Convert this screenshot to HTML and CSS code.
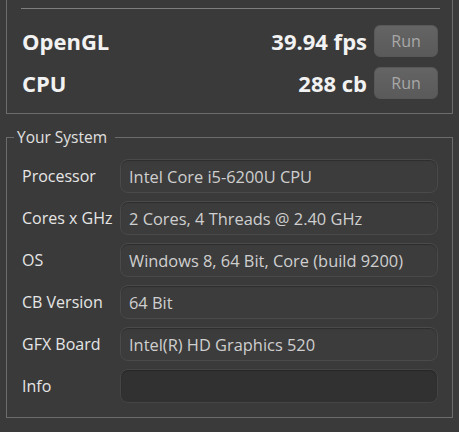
FILE: index.html
```html
<!DOCTYPE html>
<html>
<head>
<meta charset="utf-8">
<link rel="stylesheet" href="styles.css">
</head>
<body>
<div class="results">
  <div class="sep"></div>
  <div class="bench">
    <div class="bench-row">
      <span class="bench-name">OpenGL</span>
      <span class="bench-score">39.94 fps</span>
      <button class="run">Run</button>
    </div>
    <div class="bench-row">
      <span class="bench-name">CPU</span>
      <span class="bench-score">288 cb</span>
      <button class="run">Run</button>
    </div>
  </div>
</div>
<fieldset class="system">
  <legend class="system-title">Your System</legend>
  <div class="sys-grid">
    <div class="label">Processor</div><div class="field">Intel Core i5-6200U CPU</div>
    <div class="label">Cores x GHz</div><div class="field">2 Cores, 4 Threads @ 2.40 GHz</div>
    <div class="label">OS</div><div class="field">Windows 8, 64 Bit, Core (build 9200)</div>
    <div class="label">CB Version</div><div class="field">64 Bit</div>
    <div class="label">GFX Board</div><div class="field">Intel(R) HD Graphics 520</div>
    <div class="label">Info</div><div class="field field-empty"></div>
  </div>
</fieldset>
</body>
</html>
```
FILE: styles.css
```css
html, body {
  margin: 0;
  padding: 0;
  background: #3a3a3a;
  font-family: "Open Sans", "Noto Sans", sans-serif;
  color: #e4e4e4;
  width: 459px;
  height: 432px;
  overflow: hidden;
}

.results {
  margin-left: 6px;
  width: 445px;
  border: 1px solid #6c6c6c;
  border-top: none;
  padding-top: 8px;
  padding-bottom: 14px;
}

.sep {
  height: 1px;
  background: #7e7e7e;
  margin: 0 12px 0 14px;
}

.bench {
  display: flex;
  flex-direction: column;
  gap: 10px;
  padding: 16px 14px 0 15px;
}

.bench-row {
  display: flex;
  align-items: center;
  height: 32px;
}

.bench-name {
  flex: 1;
  font-weight: bold;
  font-size: 22px;
  line-height: 28px;
  color: #f2f2f2;
}

.bench-score {
  font-weight: bold;
  font-size: 22px;
  line-height: 28px;
  color: #f2f2f2;
  margin-right: 7px;
}

.run {
  width: 64px;
  height: 32px;
  border: 1px solid #585858;
  border-radius: 6px;
  background: linear-gradient(#646464, #5a5a5a);
  color: #a8a8a8;
  font-family: "Open Sans", "Noto Sans", sans-serif;
  font-size: 16px;
  padding: 0;
}

.system {
  margin: 13px 0 0 6px;
  width: 445px;
  border: 1px solid #6c6c6c;
  padding: 0;
  box-sizing: content-box;
  min-width: 0;
}

.system-title {
  margin-left: 7px;
  padding: 0 8px 0 3px;
  font-size: 15.5px;
  line-height: 20px;
  color: #e0e0e0;
}

.sys-grid {
  display: grid;
  grid-template-columns: 98px 1fr;
  grid-auto-rows: 34px;
  row-gap: 8px;
  padding: 12px 14px 14px 15px;
  align-items: center;
}

.label {
  font-size: 16px;
  color: #e6e6e6;
}

.field {
  height: 34px;
  box-sizing: border-box;
  border: 1px solid #4a4a4a;
  border-radius: 8px;
  background: #3c3c3c;
  box-shadow: inset 0 1px 1px rgba(0,0,0,0.25);
  display: flex;
  align-items: center;
  padding-left: 8px;
  font-size: 16.4px;
  color: #cfcfcf;
  white-space: nowrap;
}

.field-empty {
  background: #313131;
  border-color: #454545;
}
```
